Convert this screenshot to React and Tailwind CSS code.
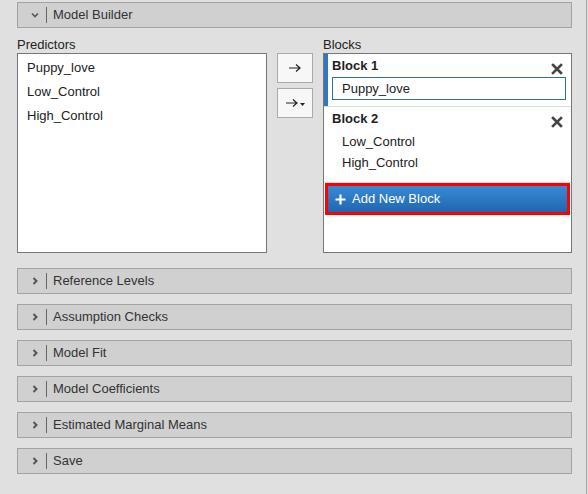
import React from "react";

function Chevron({ open }) {
  return (
    <svg width="10" height="10" viewBox="0 0 10 10" className="text-[#555]">
      {open ? (
        <path d="M2 3.5 L5 6.5 L8 3.5" fill="none" stroke="currentColor" strokeWidth="1.6" />
      ) : (
        <path d="M3.5 2 L6.5 5 L3.5 8" fill="none" stroke="currentColor" strokeWidth="2" />
      )}
    </svg>
  );
}

function Panel({ title, open }) {
  return (
    <div className="h-[26px] bg-[#d0d0d0] border border-[#a3a3a3] flex items-center">
      <div className="w-[28px] flex justify-end pr-[6px]">
        <Chevron open={open} />
      </div>
      <div className="w-px h-[16px] bg-[#666]" />
      <span className="ml-[6px] text-[13px] text-[#333]">{title}</span>
    </div>
  );
}

function CloseX() {
  return (
    <svg width="12" height="12" viewBox="0 0 12 12">
      <path d="M2 2 L10 10 M10 2 L2 10" stroke="#444" strokeWidth="2.6" strokeLinecap="square" />
    </svg>
  );
}

export default function App() {
  const panels = [
    "Reference Levels",
    "Assumption Checks",
    "Model Fit",
    "Model Coefficients",
    "Estimated Marginal Means",
    "Save",
  ];

  return (
    <div
      className="w-[588px] h-[494px] bg-[#e0e0e0] overflow-hidden"
      style={{ fontFamily: '"Liberation Sans", Arial, sans-serif' }}
    >
      <div className="w-[587px] h-full border-r border-[#a8a8a8] pl-[17px] pr-[14px] pt-[2px]">
        <Panel title="Model Builder" open />

        <div className="flex mt-[8px]">
          <div className="w-[250px]">
            <div className="text-[13px] text-[#222] h-[17px] leading-[17px]">Predictors</div>
            <div className="h-[200px] bg-white border border-[#777] pt-[2px] pl-[9px] text-[13px] text-[#222]">
              <div className="h-[24px] leading-[24px]">Puppy_love</div>
              <div className="h-[24px] leading-[24px]">Low_Control</div>
              <div className="h-[24px] leading-[24px]">High_Control</div>
            </div>
          </div>

          <div className="w-[56px] flex flex-col items-center pt-[17px] gap-[5px]">
            <div className="w-[36px] h-[30px] bg-[#f7f7f7] border border-[#aaa] flex items-center justify-center">
              <svg width="14" height="10" viewBox="0 0 14 10">
                <path d="M1 5 H12 M8 1.5 L12 5 L8 8.5" fill="none" stroke="#222" strokeWidth="1.2" />
              </svg>
            </div>
            <div className="w-[36px] h-[30px] bg-[#f7f7f7] border border-[#aaa] flex items-center justify-center">
              <svg width="14" height="10" viewBox="0 0 14 10">
                <path d="M1 5 H12 M8 1.5 L12 5 L8 8.5" fill="none" stroke="#222" strokeWidth="1.2" />
              </svg>
              <svg width="5" height="4" viewBox="0 0 5 4" className="ml-[1px] mt-[3px]">
                <path d="M0 0 H5 L2.5 3 Z" fill="#222" />
              </svg>
            </div>
          </div>

          <div className="w-[249px]">
            <div className="text-[13px] text-[#222] h-[17px] leading-[17px]">Blocks</div>
            <div className="h-[200px] bg-white border border-[#777] text-[13px] text-[#222]">
              <div className="flex border-b border-[#ddd]">
                <div className="w-[4px] bg-[#2f78bd]" />
                <div className="flex-1 pl-[4px] pr-[5px] pt-[3px] pb-[6px]">
                  <div className="flex items-center justify-between">
                    <span className="font-bold text-[13px] leading-[16px]">Block 1</span>
                    <span className="mt-[6px] mr-[3px]"><CloseX /></span>
                  </div>
                  <div className="mt-[2px] h-[23px] border border-[#2f6fa8] pl-[9px] leading-[21px]">
                    Puppy_love
                  </div>
                </div>
              </div>
              <div className="border-b border-[#ddd] pl-[8px] pr-[5px] pt-[3px] pb-[9px]">
                <div className="flex items-center justify-between">
                  <span className="font-bold text-[13px] leading-[16px]">Block 2</span>
                  <span className="mt-[6px] mr-[3px]"><CloseX /></span>
                </div>
                <div className="pl-[10px] mt-[3px]">
                  <div className="h-[21px] leading-[21px]">Low_Control</div>
                  <div className="h-[21px] leading-[21px]">High_Control</div>
                </div>
              </div>
              <div className="mx-[1px] border-[3px] border-[#ff0000]">
                <div className="h-[26px] bg-gradient-to-b from-[#3a8ad6] to-[#1f67b0] flex items-center pl-[7px] text-white text-[13px]">
                  <svg width="11" height="11" viewBox="0 0 11 11">
                    <path d="M5.5 0.5 V10.5 M0.5 5.5 H10.5" stroke="white" strokeWidth="2.2" />
                  </svg>
                  <span className="ml-[6px]">Add New Block</span>
                </div>
              </div>
            </div>
          </div>
        </div>

        <div className="mt-[15px] flex flex-col gap-[10px]">
          {panels.map((p) => (
            <Panel key={p} title={p} />
          ))}
        </div>
      </div>
    </div>
  );
}
